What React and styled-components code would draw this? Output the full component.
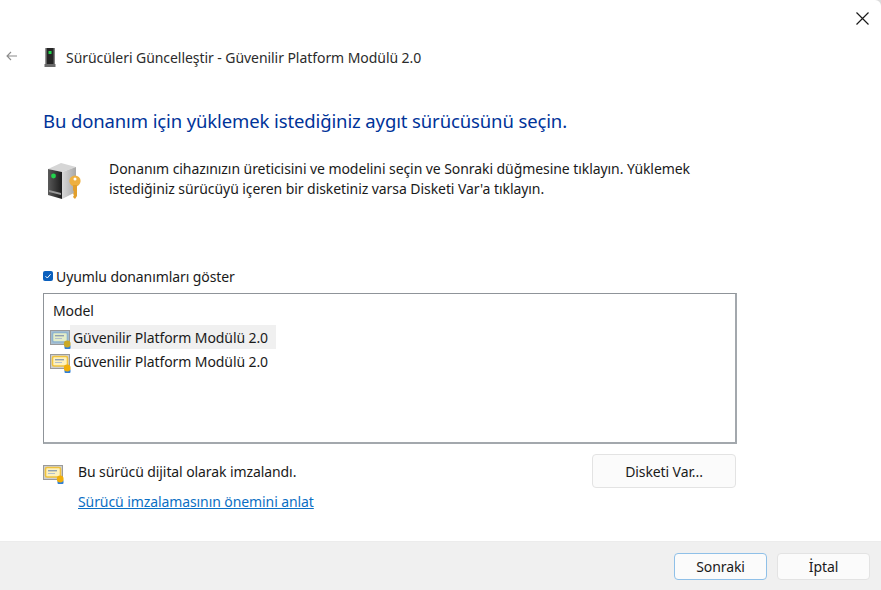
import styled, { createGlobalStyle } from "styled-components";

const GlobalStyle = createGlobalStyle`
  html, body {
    margin: 0;
    padding: 0;
    background: #dcdcdc;
  }
  * {
    box-sizing: border-box;
  }
`;

function CertIcon({ accent = "#f0c23c", fill = "#fdf1bf", frame = "#cfcfcf", seal = "#f0ae0a" }) {
  return (
    <svg width="22" height="20" viewBox="0 0 22 20">
      <rect x="0.5" y="0.5" width="19" height="14" fill={frame} stroke="#9a9a9a" />
      <rect x="2.5" y="2.5" width="15" height="9.5" rx="1.5" fill={fill} stroke={accent} strokeWidth="1.6" />
      <rect x="5" y="5" width="9" height="1.4" fill="#8fa0b2" />
      <rect x="5" y="8" width="7" height="1" fill="#b4bfca" />
      <rect x="14.5" y="15" width="6" height="4" rx="1" fill="#2f7fd6" />
      <circle cx="17.2" cy="14" r="3.4" fill={seal} />
    </svg>
  );
}

export default function App() {
  return (
    <>
      <GlobalStyle />
      <Window>
        <CloseRow>
          <CloseButton aria-label="Kapat">
            <svg width="13" height="13" viewBox="0 0 13 13">
              <path d="M0.5 0.5L12.5 12.5M12.5 0.5L0.5 12.5" stroke="#1a1a1a" strokeWidth="1.2" fill="none" />
            </svg>
          </CloseButton>
        </CloseRow>
        <TitleRow>
          <BackArrow>
            <svg width="12" height="10" viewBox="0 0 12 10">
              <path d="M11 5H1.2M5 1L1 5l4 4" stroke="#8c8c8c" strokeWidth="1.1" fill="none" />
            </svg>
          </BackArrow>
          <TitleIcon>
            <svg width="12" height="19" viewBox="0 0 12 19">
              <rect x="1.5" y="0" width="9" height="16" fill="#262626" />
              <rect x="1.5" y="0" width="1" height="16" fill="#9a9a9a" />
              <rect x="9.5" y="0" width="1" height="16" fill="#6e6e6e" />
              <rect x="4.5" y="3" width="3" height="3" fill="#21d44a" />
              <rect x="0.5" y="16" width="11" height="3" fill="#6a6a6a" />
            </svg>
          </TitleIcon>
          <WindowTitle>Sürücüleri Güncelleştir - Güvenilir Platform Modülü 2.0</WindowTitle>
        </TitleRow>
        <Content>
          <Heading>Bu donanım için yüklemek istediğiniz aygıt sürücüsünü seçin.</Heading>
          <Intro>
            <IntroIcon>
              <svg width="36" height="38" viewBox="0 0 36 38">
                <defs>
                  <linearGradient id="tower" x1="0" y1="0" x2="1" y2="0">
                    <stop offset="0" stopColor="#5a5a5a" />
                    <stop offset="1" stopColor="#1c1c1c" />
                  </linearGradient>
                  <linearGradient id="towerSide" x1="0" y1="0" x2="1" y2="0">
                    <stop offset="0" stopColor="#d8d8d8" />
                    <stop offset="1" stopColor="#a8a8a8" />
                  </linearGradient>
                </defs>
                <path d="M1 6L14 0l15 4-14 5z" fill="#d6d6d6" />
                <path d="M1 6l14 3v27L1 32z" fill="url(#tower)" />
                <path d="M15 9l14-5v25l-14 7z" fill="url(#towerSide)" />
                <circle cx="6.5" cy="13" r="2.4" fill="#22d34c" />
                <path d="M2 27l12 3v2L2 29z" fill="#9a9a9a" />
                <circle cx="28" cy="18" r="5.6" fill="#eeb040" />
                <circle cx="28" cy="16" r="1.5" fill="#ffffff" />
                <path d="M26 22h4v11l-2 3-2-2 1-2-1-1 1-2-1-2z" fill="#e29f2c" />
              </svg>
            </IntroIcon>
            <IntroText>
              Donanım cihazınızın üreticisini ve modelini seçin ve Sonraki düğmesine tıklayın. Yüklemek
              <br />
              istediğiniz sürücüyü içeren bir disketiniz varsa Disketi Var'a tıklayın.
            </IntroText>
          </Intro>
          <CheckRow>
            <CheckBox>
              <svg width="8" height="8" viewBox="0 0 8 8">
                <path d="M1.5 4.2L3.3 6 6.6 2.2" stroke="#ffffff" strokeWidth="1" fill="none" />
              </svg>
            </CheckBox>
            Uyumlu donanımları göster
          </CheckRow>
          <ModelList>
            <ListHeader>Model</ListHeader>
            <ModelItem $selected>
              <ItemIcon>
                <CertIcon accent="#8fb4cf" fill="#e3edc8" frame="#a9c0d2" seal="#c9a928" />
              </ItemIcon>
              <ItemLabel>Güvenilir Platform Modülü 2.0</ItemLabel>
            </ModelItem>
            <ModelItem>
              <ItemIcon>
                <CertIcon />
              </ItemIcon>
              <ItemLabel>Güvenilir Platform Modülü 2.0</ItemLabel>
            </ModelItem>
          </ModelList>
          <BottomRow>
            <SignInfo>
              <SignedLine>
                <SignIcon>
                  <CertIcon />
                </SignIcon>
                Bu sürücü dijital olarak imzalandı.
              </SignedLine>
              <SignLink href="#">Sürücü imzalamasının önemini anlat</SignLink>
            </SignInfo>
            <DiskButton>Disketi Var...</DiskButton>
          </BottomRow>
        </Content>
        <Footer>
          <FooterButton $primary>Sonraki</FooterButton>
          <FooterButton>İptal</FooterButton>
        </Footer>
      </Window>
    </>
  );
}

const Window = styled.div`
  width: 881px;
  height: 590px;
  background: #ffffff;
  border-top-right-radius: 6px;
  display: flex;
  flex-direction: column;
  font-family: "Noto Sans", "Open Sans", sans-serif;
  font-size: 14px;
  letter-spacing: -0.09px;
  color: #1a1a1a;
  overflow: hidden;
`;

const CloseRow = styled.div`
  height: 38px;
  display: flex;
  justify-content: flex-end;
  padding: 12px 12px 0 0;
`;

const CloseButton = styled.button`
  width: 13px;
  height: 13px;
  padding: 0;
  border: 0;
  background: none;
  display: flex;
`;

const TitleRow = styled.div`
  height: 38px;
  display: flex;
  align-items: center;
  padding-left: 6px;
`;

const BackArrow = styled.span`
  width: 38px;
  display: flex;
  margin-top: -2px;
`;

const TitleIcon = styled.span`
  width: 22px;
  display: flex;
`;

const WindowTitle = styled.span`
  font-size: 14px;
  letter-spacing: -0.06px;
  color: #2b2b2b;
`;

const Content = styled.div`
  flex: 1;
  padding: 0 144px 0 43px;
  display: flex;
  flex-direction: column;
`;

const Heading = styled.h1`
  margin: 28px 0 0;
  font-size: 18.5px;
  letter-spacing: -0.12px;
  line-height: 34px;
  font-weight: 400;
  color: #003399;
`;

const Intro = styled.div`
  margin-top: 21px;
  display: flex;
  height: 82px;
`;

const IntroIcon = styled.span`
  width: 66px;
  padding: 4px 0 0 4px;
  flex: none;
`;

const IntroText = styled.p`
  margin: 0;
  line-height: 20px;
  letter-spacing: -0.07px;
`;

const CheckRow = styled.label`
  margin-top: 25px;
  height: 20px;
  display: flex;
  align-items: center;
  gap: 3px;
`;

const CheckBox = styled.span`
  width: 10px;
  height: 10px;
  border-radius: 2px;
  background: #0a5fbd;
  display: flex;
  align-items: center;
  justify-content: center;
`;

const ModelList = styled.div`
  margin-top: 7px;
  height: 151px;
  border: 1px solid #8f9499;
  border-right: 2px solid #a3a8ad;
  border-bottom: 2px solid #a3a8ad;
  padding: 6px 6px 0;
`;

const ListHeader = styled.div`
  padding-left: 3px;
  line-height: 22px;
  margin-bottom: 3px;
`;

const ModelItem = styled.div`
  width: 226px;
  height: 24px;
  display: flex;
  align-items: center;
  background: ${(p) => (p.$selected ? "linear-gradient(90deg, #ffffff 20px, #f0f0f0 20px)" : "transparent")};
`;

const ItemIcon = styled.span`
  display: flex;
  margin-top: 5px;
`;

const ItemLabel = styled.span`
  margin-left: 1px;
`;

const BottomRow = styled.div`
  margin-top: 10px;
  display: flex;
  justify-content: space-between;
  align-items: flex-start;
`;

const SignInfo = styled.div`
  display: flex;
  flex-direction: column;
  gap: 10px;
  padding-top: 8px;
`;

const SignedLine = styled.div`
  height: 20px;
  display: flex;
  align-items: center;
  line-height: 20px;
`;

const SignIcon = styled.span`
  width: 35px;
  display: flex;
  margin-top: 5px;
`;

const SignLink = styled.a`
  margin-left: 35px;
  line-height: 20px;
  color: #0b6fc4;
`;

const DiskButton = styled.button`
  width: 144px;
  height: 34px;
  margin-right: 1px;
  border: 1px solid #e3e3e3;
  border-radius: 4px;
  background: #fbfbfb;
  font: inherit;
  letter-spacing: inherit;
  color: #1a1a1a;
`;

const Footer = styled.div`
  height: 49px;
  background: #f0f0f0;
  border-top: 1px solid #ececec;
  display: flex;
  justify-content: flex-end;
  align-items: center;
  gap: 10px;
  padding-right: 11px;
`;

const FooterButton = styled.button`
  width: 93px;
  height: 27px;
  border-radius: 4px;
  border: 1px solid ${(p) => (p.$primary ? "#8fc0e8" : "#e3e3e3")};
  background: #fbfbfb;
  font: inherit;
  letter-spacing: inherit;
  color: #1a1a1a;
`;
